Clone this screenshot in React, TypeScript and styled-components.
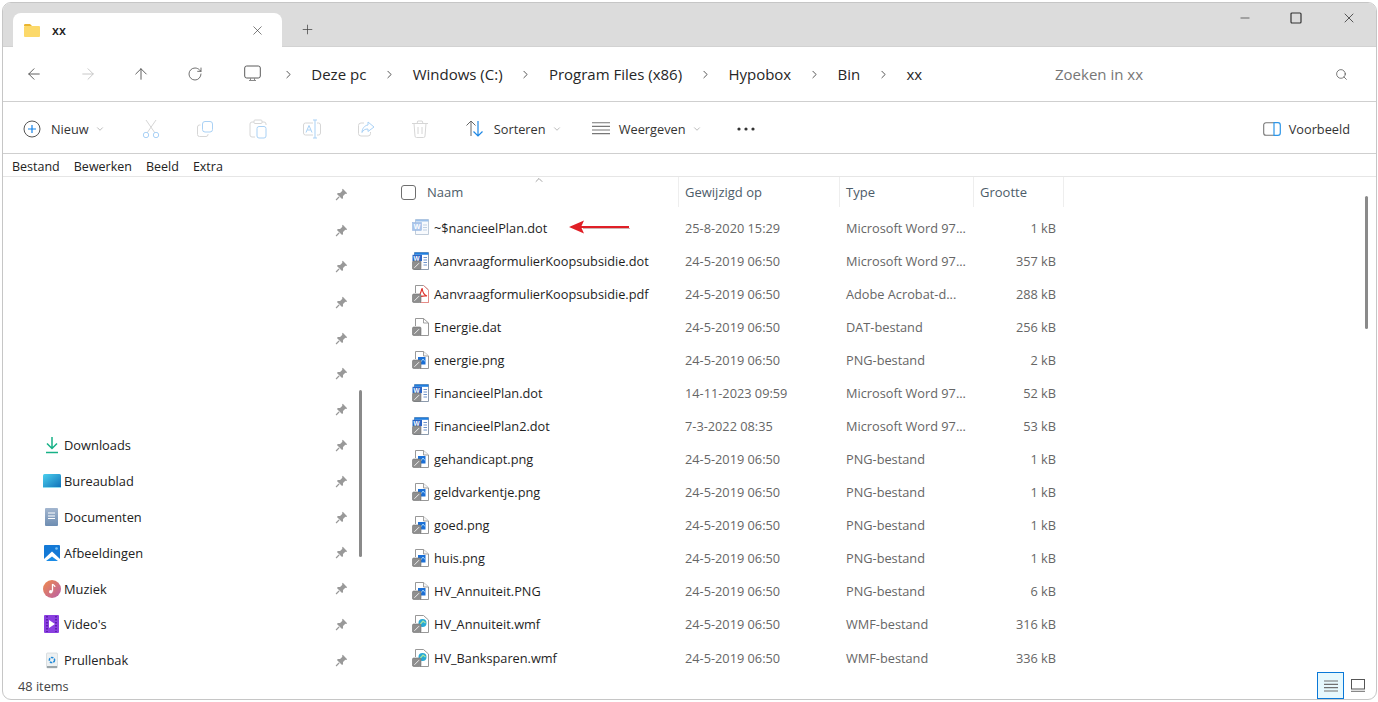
import React from "react";
import styled, { createGlobalStyle } from "styled-components";
import { ArrowLeft, ArrowRight, ArrowUp, RotateCw, ChevronRight, ChevronDown, ChevronUp, X, Plus, Minus, Search } from "lucide-react";

const Global = createGlobalStyle`
  html, body { margin: 0; padding: 0; background: #fff; }
  body { font-family: "Open Sans", "Noto Sans", "Liberation Sans", sans-serif; color: #1b1b1b; }
  * { box-sizing: border-box; }
`;

const Win = styled.div`
  margin: 2px; width: 1375px; height: 698px; display: flex; flex-direction: column;
  border: 1px solid #c6c6c6; border-radius: 9px; overflow: hidden; background: #fff;
`;
const TitleBar = styled.div`
  height: 44px; background: #dcdcdc; display: flex; align-items: flex-end; padding-left: 10px; border-bottom: 1px solid #d2d2d2; flex: none;
`;
const Tab = styled.div`
  width: 269px; height: 34px; background: #fff; border-radius: 8px 8px 0 0; display: flex; align-items: center; padding: 0 17px 0 11px; margin-bottom: -1px;
`;
const TabName = styled.span`
  margin-left: 12px; flex: 1; font-size: 12.5px; font-weight: 600; color: #222;
`;
const NewTab = styled.div`
  width: 50px; height: 34px; display: flex; align-items: center; justify-content: center; color: #444;
`;
const WinControls = styled.div`
  margin-left: auto; align-self: flex-start; display: flex;
`;
const WinBtn = styled.div<{ $w: number }>`
  width: ${p => p.$w}px; height: 30px; display: flex; align-items: center; justify-content: center; color: #333;
`;

const NavBar = styled.div`
  height: 55px; flex: none; display: flex; align-items: center; border-bottom: 1px solid #cfcfcf; padding-left: 21px;
`;
const NavBtn = styled.div<{ $dim?: boolean; $mr: number }>`
  width: 20px; height: 20px; margin-right: ${p => p.$mr}px; color: ${p => (p.$dim ? "#c4c4c4" : "#555")}; display: flex; align-items: center; justify-content: center;
`;
const Crumbs = styled.div`
  display: flex; align-items: center; margin-left: 4px; padding-bottom: 1px; font-size: 15px; color: #262626;
`;
const Crumb = styled.span`
  white-space: nowrap;
`;
const Sep = styled.span`
  width: 46.3px; display: flex; justify-content: center; color: #222; padding-top: 1px;
`;
const SearchBox = styled.div`
  margin-left: auto; width: 321px; display: flex; align-items: center; justify-content: space-between; padding-right: 28px; font-size: 15px; color: #777;
`;

const CmdBar = styled.div`
  height: 52px; flex: none; display: flex; align-items: center; border-bottom: 1px solid #cfcfcf; padding: 2px 26px 0 20px; font-size: 12.75px; color: #333;
`;
const CmdItem = styled.div<{ $w: number }>`
  width: ${p => p.$w}px; display: flex; align-items: center; height: 32px; flex: none;
`;
const CmdLabel = styled.span<{ $ml: number }>`
  margin: 0 6px 0 ${p => p.$ml}px; white-space: nowrap;
`;
const Ghost = styled.div`
  width: 53.8px; flex: none; display: flex; justify-content: center;
`;
const Preview = styled.div`
  margin-left: auto; display: flex; align-items: center; gap: 8px;
`;

const MenuBar = styled.div`
  height: 23px; flex: none; display: flex; align-items: center; gap: 14px; padding: 2px 0 0 9px; border-bottom: 1px solid #e6e6e6; font-size: 12.5px; color: #222;
`;

const Main = styled.div`
  flex: 1; min-height: 0; display: flex; overflow: hidden; position: relative;
`;
const Sidebar = styled.div`
  width: 377px; flex: none; position: relative; overflow: hidden;
`;
const SideRow = styled.div`
  height: 35.8px; display: flex; align-items: center; padding: 0 32px 0 36px; font-size: 12.85px; color: #222;
`;
const SideIcon = styled.span`
  width: 25px; height: 20px; display: flex; align-items: center; justify-content: center; flex: none;
`;
const SideText = styled.span`
  flex: 1; white-space: nowrap;
`;
const Thumb = styled.div<{ $x: number; $y: number; $h: number }>`
  position: absolute; left: ${p => p.$x}px; top: ${p => p.$y}px; width: 3px; height: ${p => p.$h}px; background: #8a8a8a; border-radius: 2px;
`;

const ListPane = styled.div`
  flex: 1; min-width: 0; padding-left: 8px;
`;
const cols = "291px 161px 134px 90px";
const Header = styled.div`
  display: grid; grid-template-columns: ${cols}; height: 30px; margin-bottom: 4px; position: relative; font-size: 13px; color: #4d5c69;
`;
const HCell = styled.div<{ $pl: number }>`
  display: flex; align-items: center; padding-left: ${p => p.$pl}px; border-right: 1px solid #eeeeee;
`;
const SortCaret = styled.span`
  position: absolute; left: 145px; top: -3px; color: #666; display: flex;
`;
const Check = styled.span`
  width: 15px; height: 15px; border: 1px solid #6f6f6f; border-radius: 3px; margin-right: 11px; flex: none;
`;
const Row = styled.div`
  display: grid; grid-template-columns: ${cols}; height: 33.09px; align-items: center; font-size: 12.75px; color: #666;
`;
const NameCell = styled.div`
  display: flex; align-items: center; padding-left: 24px; color: #1e1e1e; white-space: nowrap;
`;
const FileName = styled.span`
  margin-left: 5px;
`;
const Arrow = styled.svg`
  margin-left: 22px; flex: none;
`;
const Cell = styled.div`
  padding-left: 6px; white-space: nowrap;
`;
const SizeCell = styled.div`
  text-align: right; padding-right: 8px; white-space: nowrap;
`;

const StatusBar = styled.div`
  height: 27px; flex: none; display: flex; align-items: center; padding-left: 15px; font-size: 12.75px; color: #444;
`;
const ViewToggle = styled.div`
  margin-left: auto; display: flex; align-items: center; padding-right: 5px; height: 100%;
`;
const ListBtn = styled.div`
  width: 27px; height: 27px; border: 1px solid #0a78d8; background: #e6f8fd; display: flex; align-items: center; justify-content: center;
`;
const TileBtn = styled.div`
  width: 27px; display: flex; align-items: center; justify-content: center;
`;

const Badge = () => (
  <g>
    <rect x="0.5" y="9" width="8.5" height="8.5" rx="1.3" fill="#8e8e8e" stroke="#707070" strokeWidth="0.6" />
    <path d="M2.4 15.8 L7 11.2" stroke="#eeeeee" strokeWidth="1" />
  </g>
);
const Page = () => (
  <path d="M3.5 8V.5H11.5L16.5 5V17.5H8" fill="#fff" stroke="#8c8c8c" strokeWidth="0.9" />
);

type Kind = "word" | "wordfaint" | "pdf" | "dat" | "png" | "wmf";
const FileIcon = ({ kind }: { kind: Kind }) => {
  const size = { width: 17, height: 18, viewBox: "0 0 17 18" };
  if (kind === "wordfaint")
    return (
      <svg {...size}>
        <path d="M3.5 .5H16.5V15.5H3.5Z" fill="#f8fafd" stroke="#b9c6d6" strokeWidth="0.9" />
        <path d="M3.5 .5H16.5V2.5H3.5Z" fill="#9cc0ea" />
        <rect x="0.5" y="3.5" width="9" height="8" fill="#a9c4ea" stroke="#8fb2e0" strokeWidth="0.5" />
        <text x="1.7" y="10" fontSize="7" fontWeight="700" fill="#fff" fontFamily="Liberation Sans">W</text>
        <path d="M11 6H15M11 8.5H15M11 11H15" stroke="#c0d0e4" />
      </svg>
    );
  if (kind === "word")
    return (
      <svg {...size}>
        <path d="M2.5 .5H16.5V17.5H2.5Z" fill="#fff" stroke="#7f8ea3" strokeWidth="0.9" />
        <path d="M2.5 .5H16.5V2.8H2.5Z" fill="#1f7fe0" />
        <rect x="0.5" y="2.8" width="9.5" height="6.4" fill="#2a64c4" />
        <text x="1.4" y="8.6" fontSize="6.4" fontWeight="700" fill="#fff" fontFamily="Liberation Sans">W</text>
        <path d="M11.5 5.5H15M11.5 8H15M11.5 10.5H15M11.5 13H15" stroke="#5e87c4" strokeWidth="0.9" />
        <Badge />
      </svg>
    );
  if (kind === "pdf")
    return (
      <svg {...size}>
        <Page />
        <path d="M10 3C9 8 8 11 5 13C9 11 12 10.5 15 11C12 10 10.5 7 10 3Z" fill="none" stroke="#e0332c" strokeWidth="1.2" />
        <path d="M11.5 .5L16.5 5V17.5H9" fill="none" stroke="#ee8a85" strokeWidth="0.9" />
        <Badge />
      </svg>
    );
  if (kind === "dat")
    return (
      <svg {...size}>
        <Page />
        <path d="M11.5 .5V5H16.5" fill="none" stroke="#8c8c8c" strokeWidth="0.8" />
        <Badge />
      </svg>
    );
  if (kind === "png")
    return (
      <svg {...size}>
        <Page />
        <path d="M11.5 .5V5H16.5" fill="#f4f4f4" stroke="#8c8c8c" strokeWidth="0.8" />
        <rect x="6" y="6" width="7.5" height="7.5" fill="#1b6fd6" />
        <path d="M8 12L11 8L13 10.5" fill="none" stroke="#9fd3f7" strokeWidth="1" />
        <Badge />
      </svg>
    );
  return (
    <svg {...size}>
      <Page />
      <circle cx="10.5" cy="8" r="4" fill="#27a9d6" />
      <path d="M8 9.5L11 6L13.5 8" fill="none" stroke="#a7e4a0" strokeWidth="1.2" />
      <Badge />
    </svg>
  );
};

const PinIcon = () => (
  <svg width="13" height="13" viewBox="0 0 12 12">
    <path d="M7.2.8 11.2 4.8 10.4 5.5 9.5 5.2 7.4 7.3 7.4 9.4 6.5 10.2 1.8 5.5 2.6 4.6 4.7 4.6 6.8 2.5 6.5 1.6Z" fill="#999" />
    <path d="M3.8 8.2 1 11" stroke="#999" strokeWidth="1.2" />
  </svg>
);

const stroke = { fill: "none", stroke: "#a9d1f5", strokeWidth: 1 };
const gray = { fill: "none", stroke: "#d6d6d6", strokeWidth: 1 };
const ghostIcons = [
  <svg key="cut" width="18" height="20" viewBox="0 0 18 20"><path d="M4 1 13 14M14 1 5 14" {...gray} /><circle cx="4" cy="16" r="2.7" {...stroke} /><circle cx="14" cy="16" r="2.7" {...stroke} /></svg>,
  <svg key="copy" width="18" height="18" viewBox="0 0 18 18"><rect x="6.5" y="1.5" width="10" height="10.5" rx="2.5" {...stroke} /><path d="M4.5 5H3.5A2 2 0 0 0 1.5 7V14.5A2 2 0 0 0 3.5 16.5H10A2 2 0 0 0 12 14.5V14" {...gray} /></svg>,
  <svg key="paste" width="18" height="20" viewBox="0 0 18 20"><path d="M5 3H3A2 2 0 0 0 1 5V16A2 2 0 0 0 3 18H6M13 3H15A2 2 0 0 1 17 5V6" {...gray} /><rect x="5" y="1" width="8" height="3.5" rx="1" {...gray} /><rect x="8" y="7.5" width="9" height="11.5" rx="2" {...stroke} /></svg>,
  <svg key="ren" width="18" height="20" viewBox="0 0 18 20"><path d="M10 4H2.5A2 2 0 0 0 .5 6V14A2 2 0 0 0 2.5 16H10M14 4H15.5A2 2 0 0 1 17.5 6V14A2 2 0 0 1 15.5 16H14" {...gray} /><path d="M12 1V19M10 1H14M10 19H14" {...stroke} /><path d="M3 13.5 6 6.5 9 13.5M4.3 11H7.7" {...stroke} /></svg>,
  <svg key="share" width="18" height="18" viewBox="0 0 18 18"><path d="M7 3H4A2.5 2.5 0 0 0 1.5 5.5V13.5A2.5 2.5 0 0 0 4 16H11A2.5 2.5 0 0 0 13.5 13.5V12" {...gray} /><path d="M11 2 17 7 11 11.5V9C8 9 6 10 5 12.5 5 8.5 7.5 5.5 11 5Z" {...stroke} /></svg>,
  <svg key="trash" width="18" height="20" viewBox="0 0 18 20"><path d="M1 4.5H17M6 4.5 6.8 2H11.2L12 4.5M3 4.5 4 17A1.5 1.5 0 0 0 5.5 18.5H12.5A1.5 1.5 0 0 0 14 17L15 4.5M7 8V15M11 8V15" {...gray} /></svg>,
];

const Tri = () => <ChevronDown size={10} strokeWidth={1.2} color="#777" />;

const FolderIcon = () => (
  <svg width="16" height="13" viewBox="0 0 16 13">
    <path d="M0 1.2A1.2 1.2 0 0 1 1.2 0H6L8 2H0Z" fill="#eab530" />
    <rect x="0" y="2" width="16" height="11" rx="1" fill="#fcd96a" />
  </svg>
);

const sideItems: { name?: string; icon?: React.ReactNode }[] = [
  {}, {}, {}, {}, {}, {}, {},
  { name: "Downloads", icon: <svg width="16" height="18" viewBox="0 0 16 18"><path d="M8 1V12M3 7.5 8 12.5 13 7.5" fill="none" stroke="#17b187" strokeWidth="1.5" /><path d="M2 16.5H14" stroke="#17b187" strokeWidth="1.5" /></svg> },
  { name: "Bureaublad", icon: <svg width="18" height="15" viewBox="0 0 18 15"><defs><linearGradient id="bd" x1="0" y1="0" x2="1" y2="1"><stop offset="0" stopColor="#4cd0ee" /><stop offset="1" stopColor="#0f6fb8" /></linearGradient></defs><rect width="18" height="14" rx="1.5" fill="url(#bd)" /><path d="M0 13.5H18" stroke="#8fdcef" /></svg> },
  { name: "Documenten", icon: <svg width="13" height="18" viewBox="0 0 13 18"><defs><linearGradient id="dc" x1="0" y1="0" x2="0" y2="1"><stop offset="0" stopColor="#a3b6cf" /><stop offset="1" stopColor="#6e8db2" /></linearGradient></defs><rect width="13" height="18" rx="1" fill="url(#dc)" /><path d="M3 5H10M3 8H10M3 10.5H10" stroke="#fff" /></svg> },
  { name: "Afbeeldingen", icon: <svg width="16" height="16" viewBox="0 0 16 16"><rect width="16" height="16" rx="1" fill="#1479d6" /><path d="M0 14 8 6.5 16 14V16H0Z" fill="#fff" /><path d="M2 16 8 11.5 14 16Z" fill="#1a8be6" /><circle cx="12.5" cy="3.5" r="1.3" fill="#7cc4f5" /></svg> },
  { name: "Muziek", icon: <svg width="18" height="18" viewBox="0 0 18 18"><defs><linearGradient id="mz" x1="0" y1="0" x2="1" y2="1"><stop offset="0" stopColor="#f08a4a" /><stop offset="1" stopColor="#b95fa8" /></linearGradient></defs><circle cx="9" cy="9" r="9" fill="url(#mz)" /><path d="M9.5 4V11.5" stroke="#fff" strokeWidth="1.3" /><path d="M9.5 4C10.5 5.5 12 5.5 12 7" fill="none" stroke="#fff" strokeWidth="1.1" /><circle cx="7.8" cy="11.8" r="1.8" fill="#fff" /></svg> },
  { name: "Video's", icon: <svg width="15" height="18" viewBox="0 0 15 18"><rect width="15" height="18" rx="1" fill="#8a3fe0" /><path d="M3 1V17M12 1V17" stroke="#5d1fae" strokeWidth="2" strokeDasharray="1.6 1.4" /><path d="M5 5 11 9 5 13Z" fill="#fff" /></svg> },
  { name: "Prullenbak", icon: <svg width="12" height="17" viewBox="0 0 12 17"><rect x="0.5" y="1" width="11" height="15" rx="1" fill="#eef1f2" stroke="#c8cfd2" strokeWidth="0.6" /><path d="M1 14H11V16H1Z" fill="#9aa5aa" /><circle cx="6" cy="8" r="2.6" fill="none" stroke="#1e88d8" strokeWidth="1.5" strokeDasharray="2.6 1" /></svg> },
];

const files: { icon: Kind; name: string; date: string; type: string; size: string; arrow?: boolean }[] = [
  { icon: "wordfaint", name: "~$nancieelPlan.dot", date: "25-8-2020 15:29", type: "Microsoft Word 97...", size: "1 kB", arrow: true },
  { icon: "word", name: "AanvraagformulierKoopsubsidie.dot", date: "24-5-2019 06:50", type: "Microsoft Word 97...", size: "357 kB" },
  { icon: "pdf", name: "AanvraagformulierKoopsubsidie.pdf", date: "24-5-2019 06:50", type: "Adobe Acrobat-d...", size: "288 kB" },
  { icon: "dat", name: "Energie.dat", date: "24-5-2019 06:50", type: "DAT-bestand", size: "256 kB" },
  { icon: "png", name: "energie.png", date: "24-5-2019 06:50", type: "PNG-bestand", size: "2 kB" },
  { icon: "word", name: "FinancieelPlan.dot", date: "14-11-2023 09:59", type: "Microsoft Word 97...", size: "52 kB" },
  { icon: "word", name: "FinancieelPlan2.dot", date: "7-3-2022 08:35", type: "Microsoft Word 97...", size: "53 kB" },
  { icon: "png", name: "gehandicapt.png", date: "24-5-2019 06:50", type: "PNG-bestand", size: "1 kB" },
  { icon: "png", name: "geldvarkentje.png", date: "24-5-2019 06:50", type: "PNG-bestand", size: "1 kB" },
  { icon: "png", name: "goed.png", date: "24-5-2019 06:50", type: "PNG-bestand", size: "1 kB" },
  { icon: "png", name: "huis.png", date: "24-5-2019 06:50", type: "PNG-bestand", size: "1 kB" },
  { icon: "png", name: "HV_Annuiteit.PNG", date: "24-5-2019 06:50", type: "PNG-bestand", size: "6 kB" },
  { icon: "wmf", name: "HV_Annuiteit.wmf", date: "24-5-2019 06:50", type: "WMF-bestand", size: "316 kB" },
  { icon: "wmf", name: "HV_Banksparen.wmf", date: "24-5-2019 06:50", type: "WMF-bestand", size: "336 kB" },
];

const crumbs = ["Deze pc", "Windows (C:)", "Program Files (x86)", "Hypobox", "Bin", "xx"];

export default function App() {
  return (
    <>
      <Global />
      <Win>
        <TitleBar>
          <Tab>
            <FolderIcon />
            <TabName>xx</TabName>
            <X size={15} strokeWidth={1} color="#333" />
          </Tab>
          <NewTab><Plus size={15} strokeWidth={1.2} /></NewTab>
          <WinControls>
            <WinBtn $w={51}><Minus size={14} strokeWidth={1.2} /></WinBtn>
            <WinBtn $w={52}>
              <svg width="12" height="12" viewBox="0 0 12 12"><rect x="1" y="1" width="10" height="10" rx="1" fill="none" stroke="#333" strokeWidth="1.2" /></svg>
            </WinBtn>
            <WinBtn $w={54}><X size={16} strokeWidth={1.2} /></WinBtn>
          </WinControls>
        </TitleBar>

        <NavBar>
          <NavBtn $mr={34}><ArrowLeft size={18} strokeWidth={1.25} /></NavBtn>
          <NavBtn $dim $mr={33}><ArrowRight size={18} strokeWidth={1.25} /></NavBtn>
          <NavBtn $mr={34}><ArrowUp size={18} strokeWidth={1.25} /></NavBtn>
          <NavBtn $mr={39}><RotateCw size={16} strokeWidth={1.25} /></NavBtn>
          <svg width="17" height="18" viewBox="0 0 17 18">
            <rect x="0.7" y="1" width="15.6" height="12" rx="2" fill="none" stroke="#5a5a5a" strokeWidth="1" />
            <path d="M5 15.5H12M6.5 13V15.5M10.5 13V15.5" stroke="#8a8a8a" strokeWidth="1" />
          </svg>
          <Crumbs>
            <Sep><ChevronRight size={13} strokeWidth={1.4} /></Sep>
            {crumbs.map((c, i) => (
              <React.Fragment key={c}>
                <Crumb>{c}</Crumb>
                {i < crumbs.length - 1 && <Sep><ChevronRight size={13} strokeWidth={1.4} /></Sep>}
              </React.Fragment>
            ))}
          </Crumbs>
          <SearchBox>
            <span>Zoeken in xx</span>
            <Search size={13} strokeWidth={1.3} color="#444" />
          </SearchBox>
        </NavBar>

        <CmdBar>
          <CmdItem $w={101}>
            <svg width="18" height="18" viewBox="0 0 18 18"><circle cx="9" cy="9" r="8" fill="none" stroke="#555" strokeWidth="1" /><path d="M9 5V13M5 9H13" stroke="#1383ea" strokeWidth="1.2" /></svg>
            <CmdLabel $ml={10}>Nieuw</CmdLabel><Tri />
          </CmdItem>
          {ghostIcons.map((g, i) => <Ghost key={i}>{g}</Ghost>)}
          <CmdItem $w={123}>
            <svg width="19" height="17" viewBox="0 0 19 17" style={{ marginLeft: 18 }}><path d="M6 16V1M1.5 5.5 6 1 10.5 5.5" fill="none" stroke="#666" strokeWidth="1" /><path d="M13 1V16M8.5 11.5 13 16 17.5 11.5" fill="none" stroke="#1e88e5" strokeWidth="1.2" /></svg>
            <CmdLabel $ml={10}>Sorteren</CmdLabel><Tri />
          </CmdItem>
          <CmdItem $w={141}>
            <svg width="18" height="13" viewBox="0 0 18 13" style={{ marginLeft: 22 }}><path d="M0 .8H18M0 4.4H18M0 8H18M0 11.6H18" stroke="#777" strokeWidth="1.1" /></svg>
            <CmdLabel $ml={9}>Weergeven</CmdLabel><Tri />
          </CmdItem>
          <svg width="18" height="4" viewBox="0 0 18 4" style={{ marginLeft: 26 }}><circle cx="2" cy="2" r="1.6" fill="#333" /><circle cx="9" cy="2" r="1.6" fill="#333" /><circle cx="16" cy="2" r="1.6" fill="#333" /></svg>
          <Preview>
            <svg width="18" height="14" viewBox="0 0 18 14"><path d="M11 .7H3A2.3 2.3 0 0 0 .7 3V11A2.3 2.3 0 0 0 3 13.3H11" fill="none" stroke="#777" strokeWidth="1.1" /><path d="M11 .7H15A2.3 2.3 0 0 1 17.3 3V11A2.3 2.3 0 0 1 15 13.3H11Z" fill="none" stroke="#2d96e8" strokeWidth="1.2" /></svg>
            <span>Voorbeeld</span>
          </Preview>
        </CmdBar>

        <MenuBar>
          <span>Bestand</span><span>Bewerken</span><span>Beeld</span><span>Extra</span>
        </MenuBar>

        <Main>
          <Sidebar>
            {sideItems.map((s, i) => (
              <SideRow key={i}>
                <SideIcon>{s.icon}</SideIcon>
                <SideText>{s.name}</SideText>
                <PinIcon />
              </SideRow>
            ))}
            <Thumb $x={356} $y={213} $h={167} />
          </Sidebar>
          <ListPane>
            <Header>
              <HCell $pl={13}><Check />Naam</HCell>
              <HCell $pl={6}>Gewijzigd op</HCell>
              <HCell $pl={6}>Type</HCell>
              <HCell $pl={6}>Grootte</HCell>
              <SortCaret><ChevronUp size={12} strokeWidth={1.2} /></SortCaret>
            </Header>
            {files.map(f => (
              <Row key={f.name}>
                <NameCell>
                  <FileIcon kind={f.icon} />
                  <FileName>{f.name}</FileName>
                  {f.arrow && (
                    <Arrow width="62" height="15" viewBox="0 0 62 15">
                      <path d="M14 8.5H61" stroke="#cfb4b4" strokeWidth="1" />
                      <path d="M0 7 15 .5 12.5 6H60V8H12.5L15 13.5Z" fill="#e01f26" />
                    </Arrow>
                  )}
                </NameCell>
                <Cell>{f.date}</Cell>
                <Cell>{f.type}</Cell>
                <SizeCell>{f.size}</SizeCell>
              </Row>
            ))}
          </ListPane>
          <Thumb $x={1362} $y={19} $h={133} />
        </Main>

        <StatusBar>
          48 items
          <ViewToggle>
            <ListBtn>
              <svg width="14" height="12" viewBox="0 0 14 12"><path d="M0 1H14M0 4.3H14M0 7.6H14M0 11H14" stroke="#707070" strokeWidth="1.2" /></svg>
            </ListBtn>
            <TileBtn>
              <svg width="14" height="13" viewBox="0 0 14 13"><rect x="0.5" y="0.5" width="13" height="9.5" fill="none" stroke="#555" /><path d="M0 12.3H14" stroke="#888" strokeWidth="1.2" /></svg>
            </TileBtn>
          </ViewToggle>
        </StatusBar>
      </Win>
    </>
  );
}
